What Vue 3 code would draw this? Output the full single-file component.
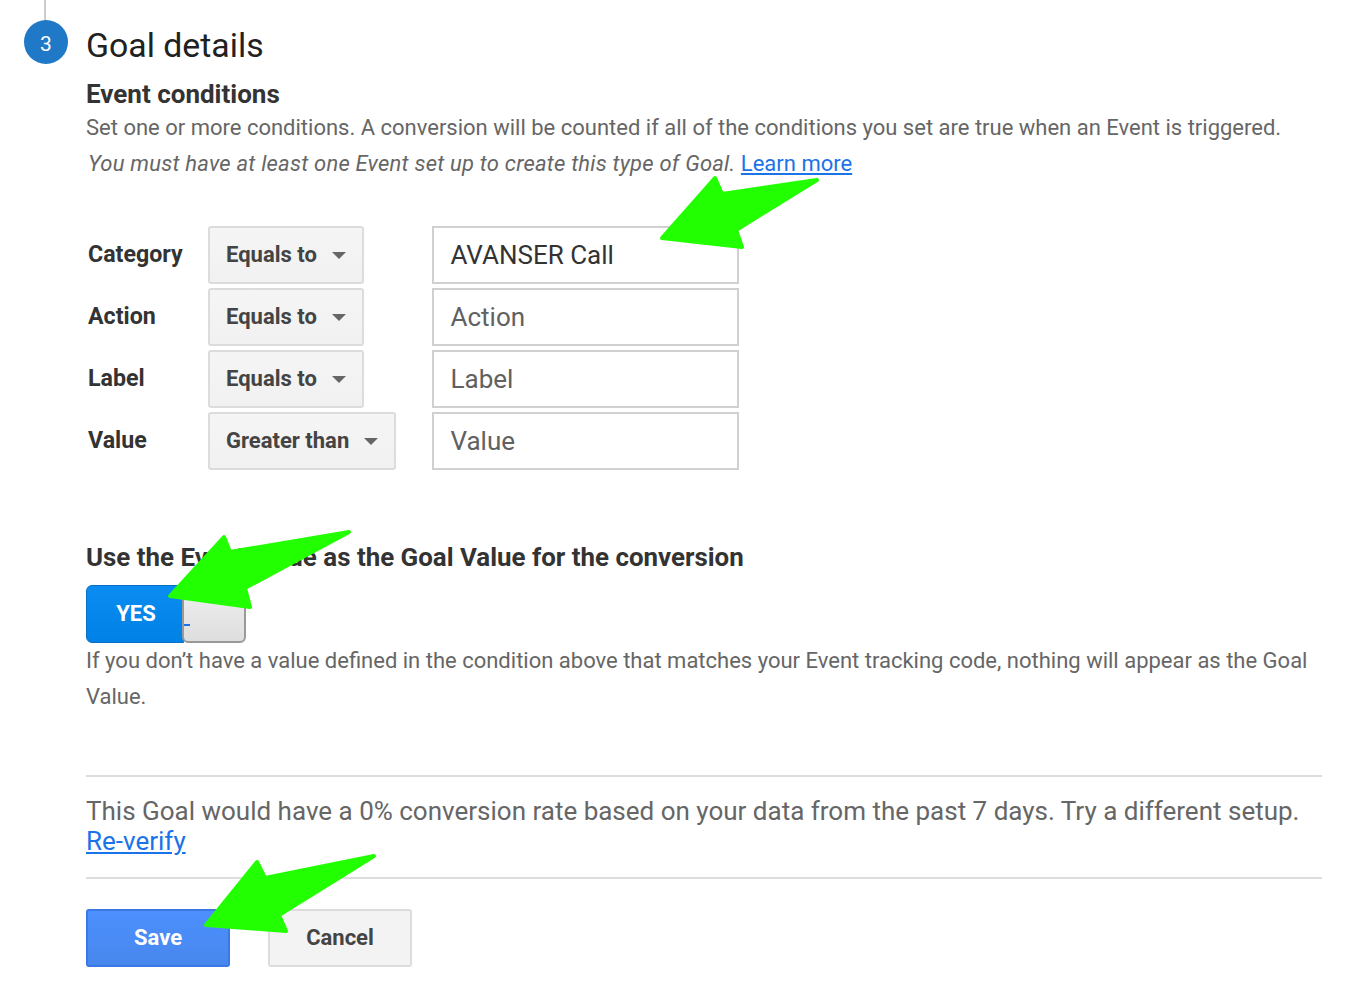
<script setup>
const rows = [
  { label: 'Category', op: 'Equals to', value: 'AVANSER Call', filled: true },
  { label: 'Action', op: 'Equals to', value: 'Action' },
  { label: 'Label', op: 'Equals to', value: 'Label' },
  { label: 'Value', op: 'Greater than', value: 'Value' },
]
const arrows = [
  '662,238 715,178 722,194 817,180 736,230 742,247',
  '170,596 224,537 230,552 349,532 245,588 250,607',
  '206,925 257,862 265,878 374,856 279,915 286,931',
]
</script>

<template>
  <div class="page">
    <div class="stem"></div>
    <div class="badge">3</div>
    <main class="content">
      <h1 class="title">Goal details</h1>
      <h2 class="sub">Event conditions</h2>
      <p class="desc">Set one or more conditions. A conversion will be counted if all of the conditions you set are true when an Event is triggered.</p>
      <p class="note"><em>You must have at least one Event set up to create this type of Goal.</em> <a href="#">Learn more</a></p>

      <div class="rows">
        <div v-for="r in rows" :key="r.label" class="row">
          <span class="label">{{ r.label }}</span>
          <div class="op-cell">
            <button class="select">{{ r.op }}<span class="caret"></span></button>
          </div>
          <div class="field" :class="{ filled: r.filled }">{{ r.value }}</div>
        </div>
      </div>

      <h3 class="use">Use the Event Value as the Goal Value for the conversion</h3>
      <div class="toggle">
        <div class="yes">YES</div>
        <div class="knob"></div>
        <span class="dash"></span>
      </div>
      <p class="help">If you don’t have a value defined in the condition above that matches your Event tracking code, nothing will appear as the Goal Value.</p>

      <div class="verify">
        <p>This Goal would have a 0% conversion rate based on your data from the past 7 days. Try a different setup.</p>
        <a href="#">Re-verify</a>
      </div>

      <div class="actions">
        <button class="save">Save</button>
        <button class="cancel">Cancel</button>
      </div>
    </main>
    <svg class="arrows" width="1368" height="988" viewBox="0 0 1368 988">
      <polygon v-for="p in arrows" :key="p" :points="p" fill="#22ff00" stroke="#22ff00" stroke-width="4" stroke-linejoin="round" />
    </svg>
  </div>
</template>

<style scoped>
.page { position: relative; width: 1368px; height: 988px; overflow: hidden; background: #fff; font-family: Roboto, sans-serif; color: #333; }
.stem { position: absolute; left: 44px; top: 0; width: 2px; height: 22px; background: #ccc; }
.badge { position: absolute; left: 24px; top: 20px; width: 44px; height: 44px; border-radius: 50%; background: #2079c7; color: #fff; font-size: 21px; line-height: 48px; text-align: center; }
.content { width: 1236px; margin-left: 86px; padding-top: 25px; display: flex; flex-direction: column; }
.title { margin: 0; font-size: 33.8px; line-height: 41px; font-weight: 400; color: #212121; }
.sub { margin: 13px 0 1px; font-size: 26px; line-height: 30px; font-weight: 700; color: #333; }
.desc { margin: 0; font-size: 22px; line-height: 36px; color: #666; }
.note { margin: 0; font-size: 22px; line-height: 36px; color: #666; }
.note em { letter-spacing: 0.22px; padding-left: 2px; }
a { color: #1a73e8; text-decoration: underline; }
.rows { margin-top: 44px; display: flex; flex-direction: column; gap: 4px; }
.row { display: flex; align-items: center; height: 58px; }
.label { width: 122px; padding: 0 0 2px 2px; box-sizing: border-box; font-size: 23.2px; font-weight: 700; color: #333; }
.op-cell { width: 224px; }
.select { display: inline-flex; align-items: center; height: 58px; padding: 0 16px 2px; box-sizing: border-box; border: 2px solid #dcdcdc; border-radius: 3px; background: linear-gradient(#f5f5f5, #f1f1f1); font: 700 22px Roboto, sans-serif; color: #444; }
.caret { margin: 2px 0 0 15px; width: 0; height: 0; border-left: 7px solid transparent; border-right: 7px solid transparent; border-top: 7px solid #666; }
.field { width: 307px; height: 58px; box-sizing: border-box; border: 2px solid #d0d0d0; padding-left: 16.5px; font-size: 26px; line-height: 54px; color: #616161; }
.field.filled { color: #333; }
.use { margin: 72px 0 0; font-size: 25.9px; line-height: 30px; font-weight: 700; color: #333; }
.toggle { position: relative; display: flex; margin-top: 13px; width: 160px; height: 58px; }
.yes { width: 98px; height: 58px; box-sizing: border-box; border-radius: 6px 0 0 6px; background: linear-gradient(#0a8cf0, #0081e6); border: 1px solid #0671c4; color: #fff; font-size: 22px; font-weight: 700; line-height: 56px; text-align: center; padding-left: 2px; }
.knob { width: 64px; height: 58px; margin-left: -2px; box-sizing: border-box; border: 2px solid #999; border-radius: 0 6px 6px 6px; background: linear-gradient(#f0f0f0, #dedede); }
.dash { position: absolute; left: 98px; top: 39px; width: 6px; height: 2px; background: #1a73e8; }
.help { margin: 0; font-size: 22px; line-height: 36px; color: #666; }
.verify { margin-top: 60px; padding: 19px 0 21px; border-top: 2px solid #ddd; border-bottom: 2px solid #ddd; font-size: 26px; line-height: 30px; color: #666; }
.verify p { margin: 0; }
.actions { margin-top: 30px; display: flex; gap: 38px; }
button { cursor: pointer; }
.save { width: 144px; height: 58px; padding-bottom: 2px; border: 2px solid #3b78e7; border-radius: 3px; background: linear-gradient(#4d90fe, #4787ed); color: #fff; font: 700 22px Roboto, sans-serif; }
.cancel { width: 144px; height: 58px; padding-bottom: 2px; border: 2px solid #dcdcdc; border-radius: 3px; background: #f3f3f3; color: #444; font: 700 22px Roboto, sans-serif; }
.arrows { position: absolute; left: 0; top: 0; pointer-events: none; }
</style>
